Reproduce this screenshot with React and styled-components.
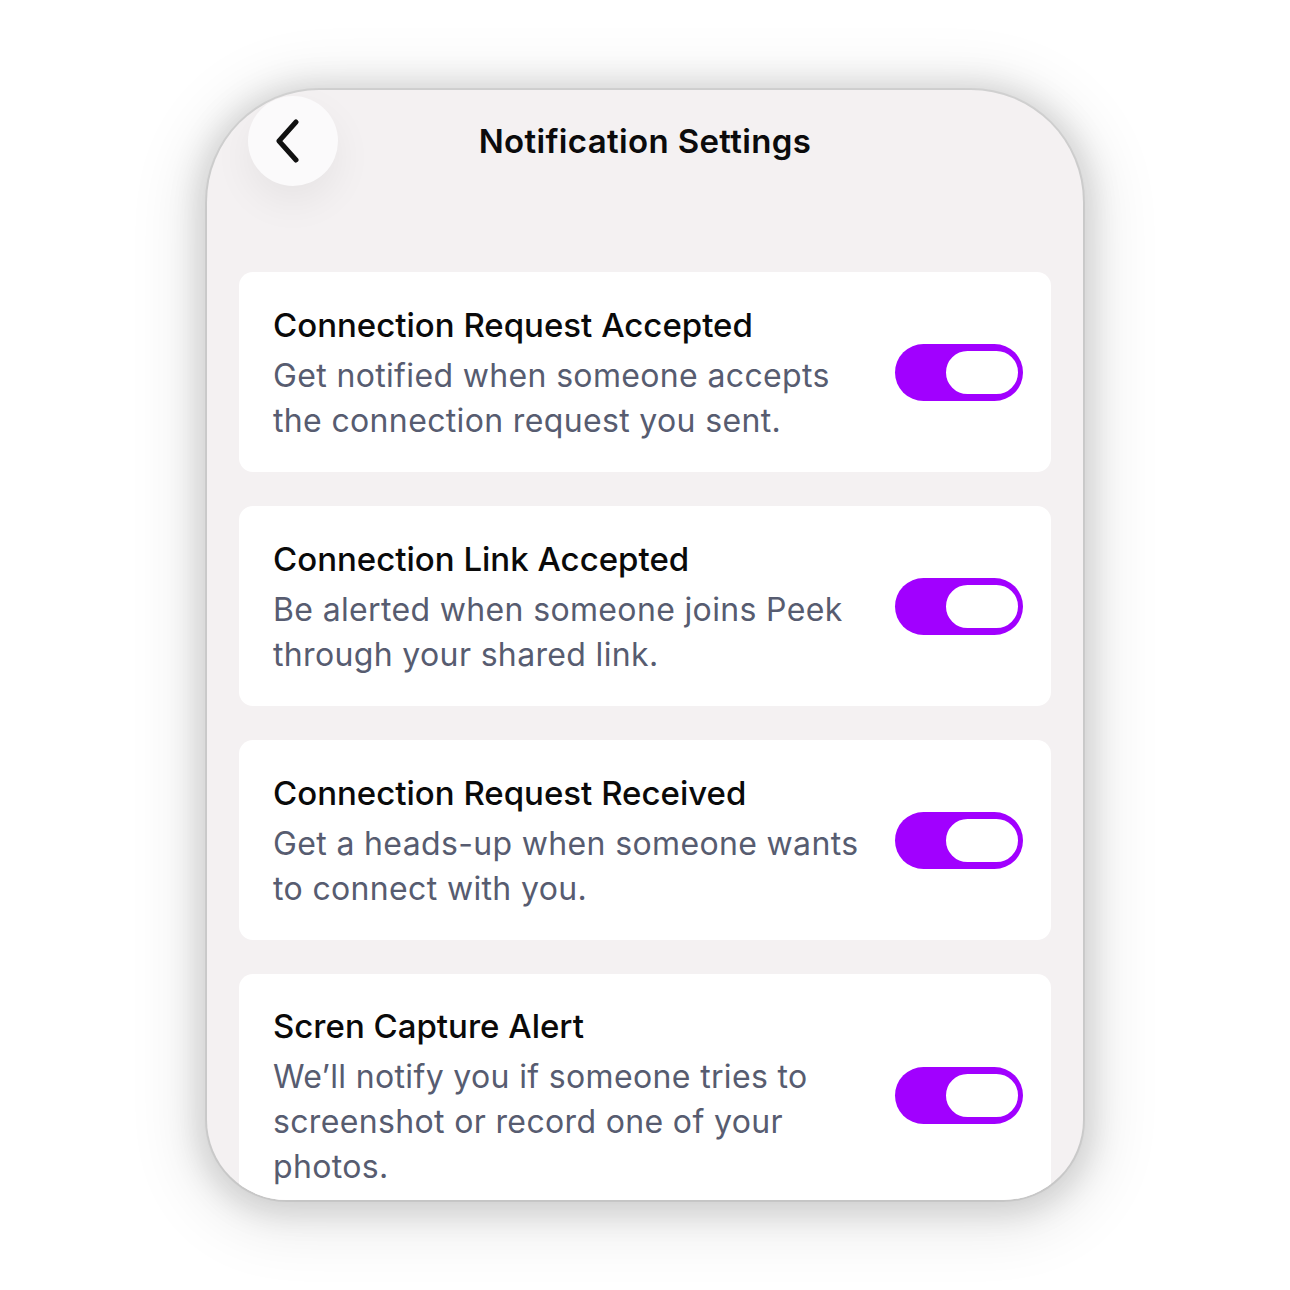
import React from "react";
import styled, { createGlobalStyle } from "styled-components";

const GlobalStyle = createGlobalStyle`
  html, body {
    margin: 0;
    padding: 0;
    background: #ffffff;
  }
  body {
    font-family: Inter, "Noto Sans", sans-serif;
    -webkit-font-smoothing: antialiased;
  }
`;

const Page = styled.div`
  width: 1290px;
  height: 1290px;
  display: flex;
  justify-content: center;
  padding-top: 90px;
  box-sizing: border-box;
`;

const Phone = styled.div`
  width: 876px;
  height: 1110px;
  background: #f4f1f2;
  border-radius: 112px 112px 80px 80px;
  box-shadow: 0 0 0 2px rgba(0, 0, 0, 0.07), 0 4px 30px 10px rgba(0, 0, 0, 0.13),
    0 10px 60px 24px rgba(0, 0, 0, 0.08);
  overflow: hidden;
  padding: 0 32px;
  box-sizing: border-box;
`;

const Header = styled.div`
  height: 182px;
  display: grid;
  grid-template-columns: 90px 1fr 90px;
  align-items: start;
  padding-top: 6px;
  box-sizing: border-box;
`;

const BackButton = styled.button`
  width: 90px;
  height: 90px;
  margin-left: 9px;
  border: none;
  border-radius: 50%;
  background: #fbfafb;
  box-shadow: 0 16px 40px rgba(0, 0, 0, 0.06);
  display: flex;
  align-items: center;
  justify-content: center;
  padding: 0 8px 0 0;
`;

const Title = styled.h1`
  margin: 0;
  text-align: center;
  font-size: 33px;
  font-weight: 600;
  color: #0b0b0c;
  letter-spacing: 0.35px;
  line-height: 90px;
`;

const List = styled.div`
  display: flex;
  flex-direction: column;
  gap: 34px;
`;

const Card = styled.div`
  background: #ffffff;
  border-radius: 14px;
  padding: 28px 28px 28px 34px;
  display: flex;
  align-items: center;
  gap: 24px;
  min-height: 200px;
  box-sizing: border-box;
`;

const Texts = styled.div`
  flex: 1;
  display: flex;
  flex-direction: column;
  gap: 8px;
  padding-top: 4px;
`;

const CardTitle = styled.div`
  font-size: 33px;
  font-weight: 500;
  color: #0a0a0a;
  line-height: 40px;
  letter-spacing: 0px;
`;

const CardDesc = styled.div`
  font-size: 32px;
  font-weight: 400;
  color: #575c70;
  line-height: 45px;
  letter-spacing: 0.35px;
`;

const Toggle = styled.div`
  flex: none;
  width: 128px;
  height: 57px;
  border-radius: 29px;
  background: #a100ff;
  display: flex;
  justify-content: ${(p) => (p.$on ? "flex-end" : "flex-start")};
  align-items: center;
  padding: 0 1px;
  box-sizing: border-box;
`;

const Knob = styled.div`
  width: 80px;
  height: 51px;
  border-radius: 26px;
  background: #ffffff;
  border: 4px solid #a100ff;
  box-sizing: border-box;
`;

const items = [
  {
    title: "Connection Request Accepted",
    desc: "Get notified when someone accepts the connection request you sent.",
  },
  {
    title: "Connection Link Accepted",
    desc: "Be alerted when someone joins Peek through your shared link.",
  },
  {
    title: "Connection Request Received",
    desc: "Get a heads-up when someone wants to connect with you.",
  },
  {
    title: "Scren Capture Alert",
    desc: "We’ll notify you if someone tries to screenshot or record one of your photos.",
  },
];

const App = () => (
  <>
    <GlobalStyle />
    <Page>
      <Phone>
        <Header>
          <BackButton aria-label="Back">
            <svg width="30" height="44" viewBox="0 0 30 44" fill="none">
              <path
                d="M22 3 L5 22 L22 41"
                stroke="#111"
                strokeWidth="5"
                strokeLinecap="round"
                strokeLinejoin="round"
              />
            </svg>
          </BackButton>
          <Title>Notification Settings</Title>
          <div />
        </Header>
        <List>
          {items.map((it) => (
            <Card key={it.title}>
              <Texts>
                <CardTitle>{it.title}</CardTitle>
                <CardDesc>{it.desc}</CardDesc>
              </Texts>
              <Toggle $on>
                <Knob />
              </Toggle>
            </Card>
          ))}
        </List>
      </Phone>
    </Page>
  </>
);

export default App;
